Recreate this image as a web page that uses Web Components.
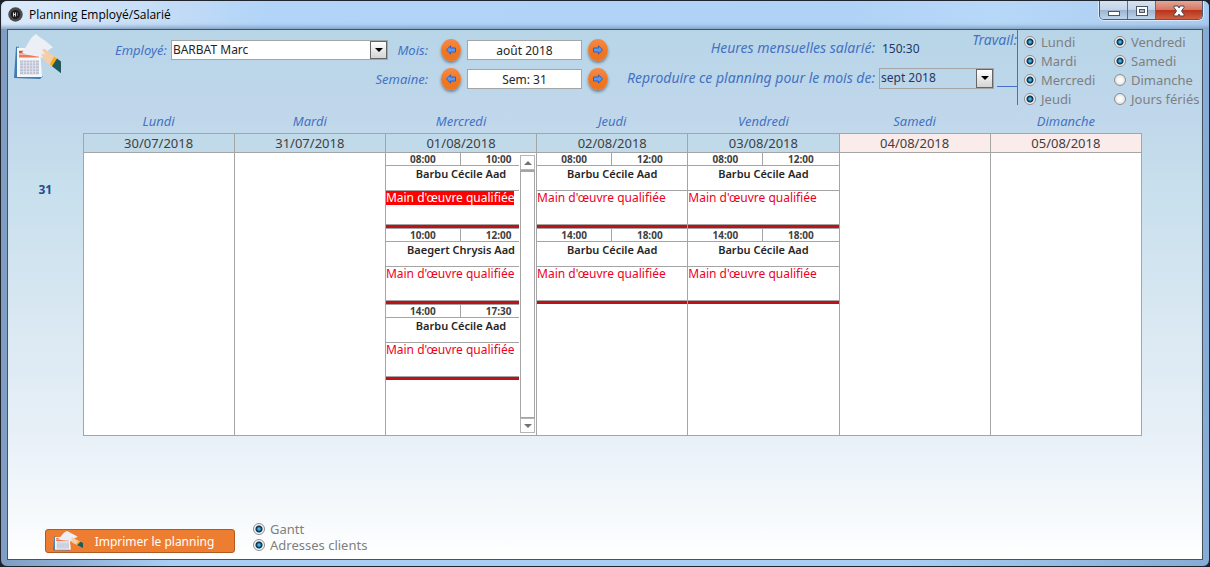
<!DOCTYPE html>
<html lang="fr">
<head>
<meta charset="utf-8">
<title>Planning Employé/Salarié</title>
<style>
html,body{margin:0;height:100%}
body{font-family:"Noto Sans","Open Sans",sans-serif;background:#1c222b}
</style>
</head>
<body>
<planning-window></planning-window>
<script>
const define = (name, html) => customElements.define(name, class extends HTMLElement {
  connectedCallback() {
    if (this.shadowRoot) return;
    const t = document.createElement('template');
    t.innerHTML = typeof html === 'function' ? html(this) : html;
    this.attachShadow({mode: 'open'}).append(t.content.cloneNode(true));
  }
});

define('calendar-hand', `
<style>:host{display:block}svg{display:block;width:100%;height:100%}</style>
<svg viewBox="0 0 47 47" preserveAspectRatio="none" aria-hidden="true">
  <path d="M2 13L5 13V42L29 43L26 46L0 45Z" fill="#3f7db0"/>
  <path d="M3 14L26 15L28 44L3 44Z" fill="#f4f6fa"/>
  <path d="M5 17L24 17V20H5Z" fill="#dc5537"/>
  <path d="M5 21H25V24H5Z" fill="#ee7a58"/>
  <path d="M6 27H25V41H6Z" fill="#bcc2d3"/>
  <path d="M6 29.500H25M6 32.500H25M6 35.500H25M6 38.500H25M9.500 27V41M12.500 27V41M15.500 27V41M18.500 27V41M21.500 27V41" stroke="#e3e6ef" stroke-width=".8"/>
  <path d="M8 19C14 12 15 4 22 0C26 4 34 8 39 14C33 16 31 20 30 25C24 22 14 23 8 19Z" fill="#eceff5"/>
  <path d="M28 16L31 15L36 20C38 21 41 23 43 26L38 33L31 28L27 20L31 21Z" fill="#f6cda9"/>
  <path d="M40 23L44 26L40 34L36 31Z" fill="#f8ac15"/>
  <path d="M43 25L47 28V40L38 33Z" fill="#1d5a60"/>
</svg>`);

define('form-label', `
<style>:host{display:block;font-style:italic;color:#4472c4;white-space:nowrap}</style><slot></slot>`);

define('combo-box', el => `
<style>
:host{display:flex;min-width:0;align-items:center;gap:4px}
label{font-style:italic;color:#4472c4;font-size:13px;white-space:nowrap}
.box{display:grid;flex:1;min-width:0;border:1px solid #a5a5a5;background:var(--combo-bg,#fff);height:var(--combo-h,18px)}
select,.drop{grid-area:1/1}
select{appearance:none;border:0;margin:0;padding:0 20px 0 1px;background:none;font:12px/18px "Noto Sans",sans-serif;color:var(--combo-ink,#262626);width:100%;min-width:0;height:100%}
.drop{justify-self:end;box-sizing:border-box;width:17px;border:1px solid #666;background:linear-gradient(#fff,#d4d4d4);display:grid;place-items:center;pointer-events:none}
.drop::after{content:"";border:4px solid transparent;border-top-color:#000;border-bottom:0}
</style>
${el.hasAttribute('label') ? `<label for="s">${el.getAttribute('label')}</label>` : ''}
<span class="box"><select id="s" aria-label="${el.getAttribute('name-label') || el.getAttribute('label')}"><option>${el.getAttribute('value')}</option></select><span class="drop"></span></span>`);

define('round-arrow', el => `
<style>
:host{display:block}
button{display:grid;place-items:center;width:20px;height:22px;border:0;border-radius:50%;padding:0;background:linear-gradient(#f58a4a,#f1761f 60%,#ee7420);box-shadow:0 2px 3px #5d6c7acc}
svg{display:block}
</style>
<button aria-label="${el.getAttribute('label')}"><svg width="10" height="10" viewBox="0 0 10 10"><path ${el.getAttribute('dir') === 'left' ? '' : 'transform="matrix(-1 0 0 1 10 0)"'} d="M.5 4.8L4.5 .8V3H9.500V7H4.500V9.200Z" fill="#5d97f0" stroke="#3560b5"/></svg></button>`);

define('period-nav', el => `
<style>
:host{display:flex;align-items:center;justify-content:flex-end}
label{font-size:13px;font-style:italic;color:#4472c4;width:40px;display:flex;justify-content:flex-end;white-space:nowrap;margin-right:13px}
input{box-sizing:border-box;width:115px;height:20px;margin:0 6px;border:1px solid #a5a5a5;background:#fff;text-align:center;font:12px "Noto Sans",sans-serif;color:#262626;padding:0}
</style>
<label for="p">${el.getAttribute('label')}</label>
<round-arrow dir="left" label="Précédent"></round-arrow>
<input id="p" value="${el.getAttribute('value')}">
<round-arrow dir="right" label="Suivant"></round-arrow>`);

define('radio-option', el => `
<style>
:host{display:block}
label{display:flex;align-items:center;gap:5px;font-size:13px;line-height:16px;color:#7f7f7f;white-space:nowrap}
input{appearance:none;flex:none;box-sizing:border-box;width:12px;height:12px;margin:0;border:1px solid #8e8f8f;border-radius:50%;background:radial-gradient(circle,#fafafa 30%,#ccd0d2)}
input:checked{background:radial-gradient(circle at 50% 50%,#4ab4e0 0 1px,#12618f 2px,#0b2a45 3px,#0b2a45 3px,#f4f4f4 4px)}
</style>
<label><input type="radio" name="${el.textContent.trim()}" ${el.hasAttribute('checked') ? 'checked' : ''}><span><slot></slot></span></label>`);

define('window-bar', `
<style>
:host{display:flex;height:28px;align-items:flex-start;padding:0 6px 0 7px;background:linear-gradient(90deg,#dcebfb,#c3dcf6 14%,#b1d4f8 22%,#afd2f6 70%,#b8d8f8 82%,#a9cbef);box-shadow:inset 0 -4px 4px -2px #7e9cbd}
.logo{margin:6px 6px 0 0;width:15px;height:15px;display:block}
h1{margin:5px 0 0;font:normal 12px/17px "Open Sans","Noto Sans",sans-serif;color:#000;flex:1;white-space:nowrap}
.buttons{display:flex;border:1px solid #4f5b6b;border-top:0;border-radius:0 0 5px 5px;overflow:hidden;box-shadow:0 0 0 1px #ffffff90}
button{box-sizing:border-box;width:28px;height:18px;border:0;border-right:1px solid #5d6c80;padding:0;display:grid;place-items:center;background:linear-gradient(#d5e2f1,#c4d4e6 48%,#9db3cf 52%,#bfd5ec)}
button:last-child{width:46px;border:0;background:linear-gradient(#e5a595,#d57863 48%,#b8341c 52%,#cf6040)}
svg{display:block}
</style>
<svg class="logo" viewBox="0 0 15 15" aria-hidden="true"><circle cx="7.500" cy="7.500" r="7.200" fill="#4a4a4c"/><circle cx="7.500" cy="7.500" r="4.500" fill="#1c1c1e"/><path d="M5.500 5.500V9.500M7.500 5.500V9.500M5.500 7.500H7.500" stroke="#ddd"/><path d="M9.500 5.500V9" stroke="#c33"/></svg>
<h1>Planning Employé/Salarié</h1>
<div class="buttons">
<button aria-label="Réduire"><svg width="14" height="16"><rect x="1.500" y="9.500" width="11" height="4" fill="#fff" stroke="#4c5565"/></svg></button>
<button aria-label="Agrandir"><svg width="14" height="16"><rect x="1.500" y="4.500" width="11" height="9" fill="#fff" stroke="#4c5565"/><rect x="4.500" y="7.500" width="5" height="3" fill="#a9bdd6" stroke="#4c5565"/></svg></button>
<button aria-label="Fermer"><svg width="14" height="16"><path d="M2 4H6L7 6L8 4H12V5.500L9.500 9L12 12.500V14H8L7 12L6 14H2V12.500L4.500 9L2 5.500Z" fill="#fff" stroke="#4c4455"/></svg></button>
</div>`);

define('work-days', `
<style>
:host{display:flex;align-items:flex-start}
.tab{display:flex;flex-direction:column;width:20px;height:56px;border-bottom:1px solid #4472c4}
.tab form-label{font-size:14px;line-height:20px;align-self:flex-end}
.days{display:grid;grid-template-columns:90px 88px;grid-auto-rows:19px;align-items:center;border-left:1px solid #4472c4;padding:2px 0 0 6px;height:73px}
</style>
<div class="tab"><form-label>Travail:</form-label></div>
<div class="days" role="group" aria-label="Travail">
<radio-option checked>Lundi</radio-option><radio-option checked>Vendredi</radio-option>
<radio-option checked>Mardi</radio-option><radio-option checked>Samedi</radio-option>
<radio-option checked>Mercredi</radio-option><radio-option>Dimanche</radio-option>
<radio-option checked>Jeudi</radio-option><radio-option>Jours fériés</radio-option>
</div>`);

define('planning-toolbar', `
<style>
:host{display:flex;align-items:flex-start;height:76px}
calendar-hand{width:47px;height:46px;margin:4px 0 0 6px;flex:none}
.main{flex:1;min-width:0;margin:9px 0 0 54px;display:grid;row-gap:7px}
.first{display:flex;align-items:center}
.first combo-box{flex:1}
.month{margin:7px 3px 0 11px;display:grid;grid-template-columns:256px 115px;gap:8px 4px;align-items:center}
.month form-label{font-size:14px;line-height:22px;text-align:right}
output{font-size:12px;color:#1f3864;padding-left:3px}
.month combo-box{--combo-bg:none;--combo-ink:#1f3864;--combo-h:19px}
</style>
<calendar-hand></calendar-hand>
<div class="main">
<div class="first"><combo-box label="Employé:" value="BARBAT Marc"></combo-box><period-nav label="Mois:" value="août 2018"></period-nav></div>
<period-nav label="Semaine:" value="Sem: 31"></period-nav>
</div>
<div class="month">
<form-label>Heures mensuelles salarié:</form-label><output>150:30</output>
<form-label>Reproduire ce planning pour le mois de:</form-label><combo-box name-label="Mois de destination" value="sept 2018"></combo-box>
</div>
<work-days></work-days>`);

define('shift-card', el => `
<style>
:host{display:block;color:#262626}
.hours{display:grid;grid-template-columns:1fr 1fr;height:12px;border-bottom:1px solid #a5a5a5;font-weight:700;font-size:10px;line-height:13px;text-align:center;color:#404040}
.hours time:first-child{border-right:1px solid #a5a5a5}
.client{height:24px;border-bottom:1px solid #a5a5a5;text-align:center;font-weight:600;font-size:11px;line-height:16px;white-space:nowrap}
.task{height:33px;border-bottom:1px solid #a5a5a5;font-size:12px;line-height:14px;color:#f00023;white-space:nowrap}
.task span{display:inline-block}
:host([selected]) .task span{background:#f00;color:#fff}
.rule{height:3px;background:#be1218;border-bottom:1px solid #a5a5a5}
:host(:last-of-type) .rule{border-bottom-color:transparent;background-clip:padding-box}
</style>
<div class="hours"><time>${el.getAttribute('from')}</time><time>${el.getAttribute('to')}</time></div>
<div class="client">${el.getAttribute('client')}</div>
<div class="task"><span>Main d'œuvre qualifiée</span></div>
<div class="rule"></div>`);

define('scroll-strip', `
<style>
:host{display:flex;flex-direction:column;width:15px;box-sizing:border-box;background:#fff}
button{height:15px;border:1px solid #b5b5b5;background:#fff;padding:0;display:grid;place-items:center}
.track{flex:1;border:1px solid #a5a5a5;border-top-width:2px}
i{border:4px solid transparent}
.up{border-bottom-color:#737373;border-top:0}.down{border-top-color:#737373;border-bottom:0}
</style>
<button aria-label="Monter"><i class="up"></i></button><div class="track"></div><button aria-label="Descendre"><i class="down"></i></button>`);

define('week-planning', () => {
  const days = [['Lundi','30/07/2018'],['Mardi','31/07/2018'],['Mercredi','01/08/2018'],['Jeudi','02/08/2018'],['Vendredi','03/08/2018'],['Samedi','04/08/2018'],['Dimanche','05/08/2018']];
  const B = 'Barbu Cécile Aad';
  const pair = [['08:00','12:00',B],['14:00','18:00',B]];
  const shifts = [[],[],[['08:00','10:00',B],['10:00','12:00','Baegert Chrysis Aad'],['14:00','17:30',B]],pair,pair,[],[]];
  const cards = (list, d) => list.map(([f,t,c], i) => `<shift-card ${d === 2 && !i ? 'selected' : ''} from="${f}" to="${t}" client="${c}"></shift-card>`).join('');
  return `
<style>
:host{display:block}
table{border-collapse:collapse;table-layout:fixed;width:100%}
col.week{width:75px}
th,td{padding:0;font-weight:400}
.names th{height:23px;font-size:13px;line-height:23px;font-style:italic;color:#4472c4}
.dates th{height:18px;font-size:13px;line-height:18px;color:#404040;border:1px solid #a5a5a5;background:#c0daea}
.dates th.off{background:#fbecec}
tbody td{height:282px;border:1px solid #a5a5a5;background:#fff;vertical-align:top}
tbody th{vertical-align:top;font-size:12px;font-weight:700;color:#1f4e8c;padding-top:28px;line-height:17px}
.list{display:grid;height:282px}
.cards,scroll-strip{grid-area:1/1;min-width:0}
.scroll{justify-self:end;display:flex;grid-area:1/1;background:#fff;padding:2px 1px}
</style>
<table>
<colgroup><col class="week"><col span="7"></colgroup>
<thead><tr class="names"><td></td>${days.map(d => `<th scope="col">${d[0]}</th>`).join('')}</tr>
<tr class="dates"><td></td>${days.map((d, i) => `<th scope="col" class="${i > 4 ? 'off' : ''}">${d[1]}</th>`).join('')}</tr></thead>
<tbody><tr><th scope="row">31</th>${shifts.map((s, d) => `<td><div class="list"><div class="cards">${cards(s, d)}</div>${d === 2 ? '<div class="scroll"><scroll-strip></scroll-strip></div>' : ''}</div></td>`).join('')}</tr></tbody>
</table>`;
});

define('planning-footer', `
<style>
:host{display:flex;align-items:flex-end;gap:18px;padding:0 37px 6px}
button{box-sizing:border-box;width:190px;height:24px;border:1px solid #ae5a21;border-radius:3px;background:#ed7d31;color:#fff;font:12px "Noto Sans",sans-serif;display:flex;align-items:center;padding:0 8px 0 7px}
calendar-hand{width:30px;height:20px}
button span{flex:1;text-align:center;white-space:nowrap}
</style>
<button><calendar-hand></calendar-hand><span>Imprimer le planning</span></button>
<div><radio-option checked>Gantt</radio-option><radio-option checked>Adresses clients</radio-option></div>`);

define('planning-window', `
<style>
:host{display:flex;flex-direction:column;box-sizing:border-box;min-height:100vh;border:1px solid #20242c;border-radius:7px;overflow:hidden;background:linear-gradient(90deg,#7f9dc2,#a9cef2 14%,#a9cef2 75%,#86acd5)}
main{flex:1;display:flex;flex-direction:column;margin:0 6px 6px;border:1px solid #46535f;background:linear-gradient(#b8d5e8,#c0d7eb 16%,#c8dfed 30%,#d9e8f2 55%,#e7f0f7 76%,#f2f7fb 88%,#fff)}
week-planning{margin:4px 60px 0 0}
.space{flex:1}
</style>
<window-bar></window-bar>
<main>
<planning-toolbar></planning-toolbar>
<week-planning></week-planning>
<div class="space"></div>
<planning-footer></planning-footer>
</main>`);
</script>
</body>
</html>
